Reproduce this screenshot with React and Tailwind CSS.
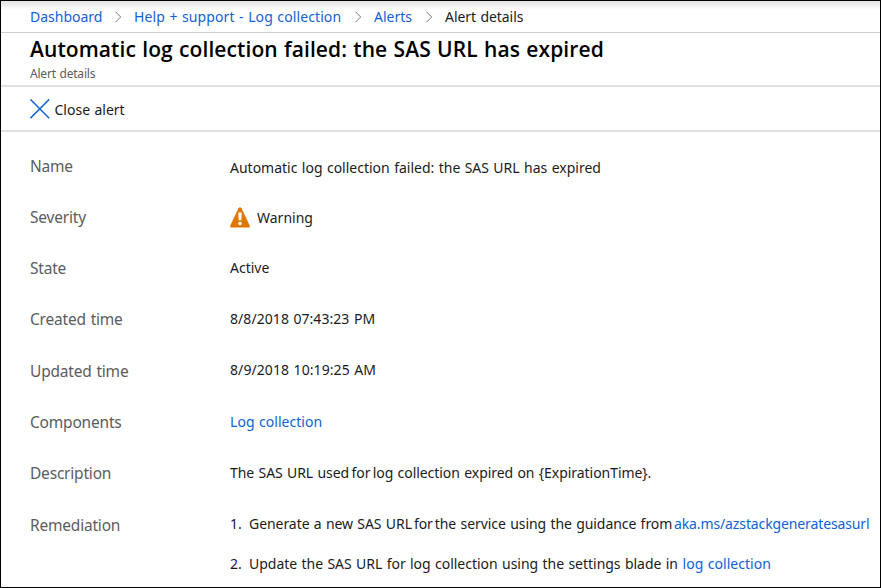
import React from "react";

function Chevron() {
  return (
    <svg width="7" height="12" viewBox="0 0 7 12" fill="none" stroke="#777" strokeWidth="1" className="shrink-0">
      <path d="M0.5 0.8 L5.7 6 L0.5 11.2" />
    </svg>
  );
}

function WarningIcon() {
  return (
    <svg width="20" height="21" viewBox="0 0 20 21" className="shrink-0">
      <path d="M8.5 1.3 Q10 -0.9 11.5 1.3 L19.6 18.2 Q20.5 20.6 18.3 20.6 L1.7 20.6 Q-0.5 20.6 0.4 18.2 Z" fill="#e07800" />
      <path d="M8.2 5.4 H11.8 L11.3 13.3 H8.7 Z" fill="#fff" />
      <circle cx="10" cy="16.5" r="1.8" fill="#fff" />
    </svg>
  );
}

function Row({ label, labelClass = "", children }) {
  return (
    <div className="flex h-[51.15px] items-center">
      <div className={"w-[200px] shrink-0 text-[15.5px] tracking-[-0.2px] text-[#5c5c5c] [word-spacing:1px] " + labelClass}>{label}</div>
      <div className="flex items-center">{children}</div>
    </div>
  );
}

export default function App() {
  return (
    <div className="flex h-[588px] w-[881px] flex-col overflow-hidden whitespace-nowrap border border-black bg-white font-['Noto_Sans',sans-serif] text-[14px] leading-[20px] text-[#1b1b1b] [word-spacing:0.75px]">
      <nav className="flex h-[32px] shrink-0 items-center border-b border-[#cfcfcf] bg-[linear-gradient(to_bottom,#e4e2e4_0px,#ffffff_9px)] pl-[29px]">
        <a className="w-[85px] text-[#0f62d8]">Dashboard</a>
        <Chevron />
        <a className="ml-[12px] w-[221px] tracking-[0.1px] text-[#0f62d8]">Help + support - Log collection</a>
        <Chevron />
        <a className="ml-[12px] w-[52px] text-[#0f62d8]">Alerts</a>
        <Chevron />
        <span className="ml-[12px] tracking-[-0.05px]">Alert details</span>
      </nav>
      <header className="h-[54px] shrink-0 border-b-2 border-[#e0e0e0] pl-[29px]">
        <h1 className="pt-[2px] font-['Open_Sans',sans-serif] text-[21px] font-semibold leading-[28px] tracking-[0.085px] text-black">
          Automatic log collection failed: the SAS URL has expired
        </h1>
        <p className="mt-[3px] text-[12px] leading-[16px] tracking-[-0.2px] text-[#5c5c5c]">Alert details</p>
      </header>
      <div className="flex h-[45px] shrink-0 items-center border-b-2 border-[#e0e0e0] pl-[28.5px]">
        <svg width="20" height="20" viewBox="0 0 20 20" fill="none" stroke="#0f62d8" strokeWidth="1.5">
          <path d="M0.4 0.4 L19.2 19.2 M19.2 0.4 L0.4 19.2" />
        </svg>
        <span className="ml-[5px] pt-[2px]">Close alert</span>
      </div>
      <main className="flex flex-col pl-[29px] pt-[9px]">
        <Row label="Name" labelClass="pb-[2px]">
          <span className="pt-[3px]">Automatic log collection failed: the SAS URL has expired</span>
        </Row>
        <Row label="Severity" labelClass="pb-[2px]">
          <WarningIcon />
          <span className="ml-[7px]">Warning</span>
        </Row>
        <Row label="State" labelClass="pb-[2px]">
          <span className="pb-[2px]">Active</span>
        </Row>
        <Row label="Created time" labelClass="pb-[1px]">
          <span className="pb-[2px] tracking-[0.06px]">8/8/2018 07:43:23 PM</span>
        </Row>
        <Row label="Updated time">
          <span className="pb-[2px] tracking-[0.08px]">8/9/2018 10:19:25 AM</span>
        </Row>
        <Row label="Components">
          <a className="tracking-[0.04px] text-[#0f62d8]">Log collection</a>
        </Row>
        <Row label="Description">
          <span className="tracking-[-0.05px]">
            The SAS URL used<span className="[word-spacing:-1.3px]"> for </span>log collection expired on {"{ExpirationTime}"}.
          </span>
        </Row>
        <Row label="Remediation">
          <span className="w-[19px] pb-[2px]">1.</span>
          <span className="w-[425px] pb-[2px] tracking-[-0.06px]">
            Generate a new SAS URL<span className="[word-spacing:-1.6px]"> for </span>the service using the guidance from
          </span>
          <a className="pb-[2px] tracking-[-0.12px] text-[#0f62d8]">aka.ms/azstackgeneratesasurl</a>
        </Row>
        <div className="flex pl-[200px] pt-[4px]">
          <span className="w-[19px]">2.</span>
          <span className="w-[433.5px] tracking-[-0.02px]">Update the SAS URL for log collection using the settings blade in</span>
          <a className="tracking-[0.04px] text-[#0f62d8]">log collection</a>
        </div>
      </main>
    </div>
  );
}
